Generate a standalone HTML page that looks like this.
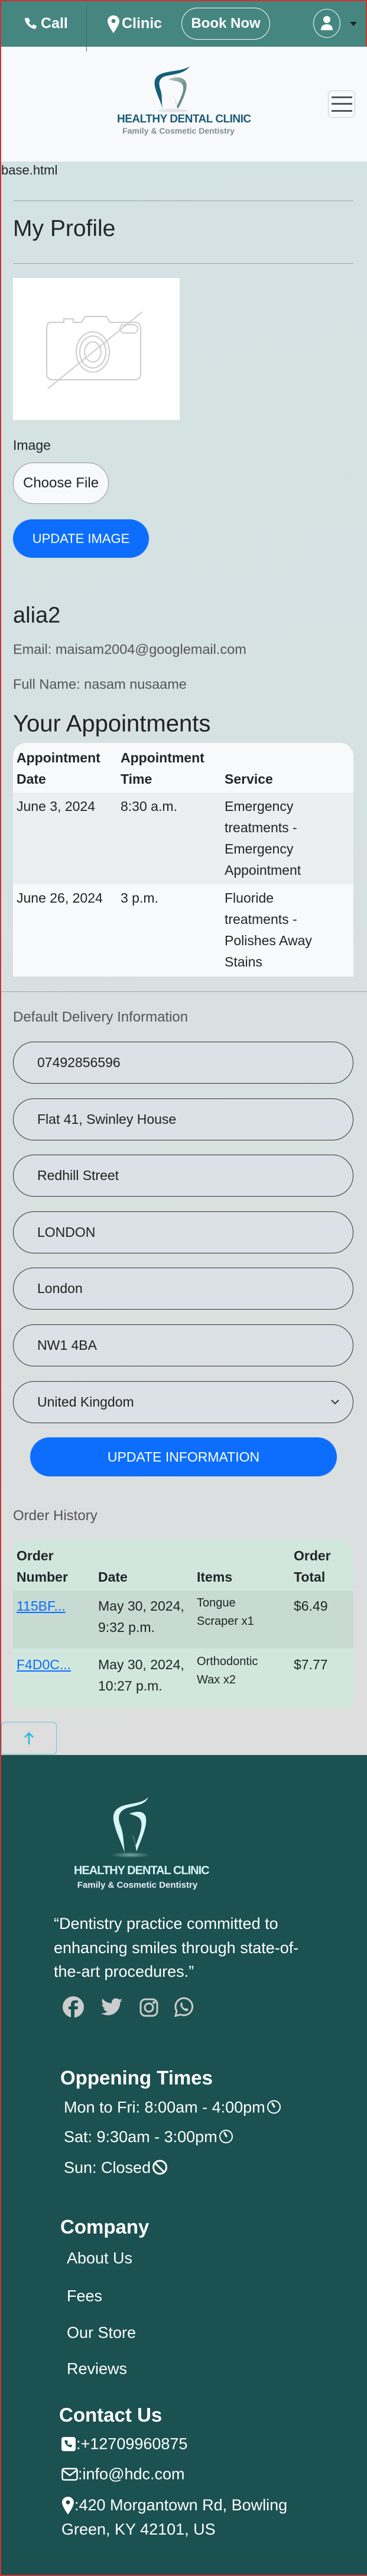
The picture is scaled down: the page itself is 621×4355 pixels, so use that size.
<!DOCTYPE html>
<html><head><meta charset="utf-8">
<style>
*{margin:0;padding:0;box-sizing:border-box}
body{width:621px;height:4355px;position:relative;font-family:"Liberation Sans",sans-serif;color:#212529;overflow:hidden;background:#dcdedf}
.a{position:absolute}
.top{left:0;top:0;width:621px;height:79px;background:#468680;border:2px solid #c33;border-bottom:none}
.hdr{left:0;top:79px;width:621px;height:194px;background:#f8f9fa}
.main{left:0;top:273px;width:621px;height:2694px;background:linear-gradient(170deg,#d3e2e3 0%,#d6e1e2 40%,#dedede 100%)}
.foot{left:0;top:2967px;width:621px;height:1388px;background:#1b5150}
.edge{left:0;top:0;width:2px;height:4355px;background:#c33}
.wt{color:#fff}
.inp{left:22px;width:576px;height:71px;border:1.5px solid #333;border-radius:36px;background:#dbe1e6;font-size:23px;line-height:68px;padding-left:40px;color:#222}
.c{transform:translateY(-50%);white-space:nowrap}
.th{font-weight:bold;font-size:23px;line-height:36px}
.td{font-size:23px;line-height:36px}
.ot{font-size:23px;line-height:36px}
</style></head><body>
<div class="a main"></div>
<div class="a hdr"></div>
<div class="a top"></div>
<div class="a foot"></div>
<div class="a edge"></div>

<!-- top bar -->
<svg class="a" style="left:40px;top:28px" width="25" height="25" viewBox="0 0 24 24"><path fill="#fff" d="M6.6 2.2c.6-.3 1.3 0 1.6.5l2 3.6c.3.6.2 1.3-.3 1.7L8.300 9.300c1 2.300 3.200 4.500 5.500 5.500l1.300-1.600c.4-.5 1.100-.6 1.700-.3l3.600 2c.6.300.800 1 .5 1.600l-1.300 2.600c-.4.800-1.300 1.200-2.200 1C9.700 18.500 3.500 12.300 1.900 4.600c-.2-.9.2-1.800 1-2.200z"/></svg>
<div class="a wt c" style="left:69px;top:40px;font-size:25px;font-weight:bold">Call</div>
<div class="a" style="left:146px;top:9px;width:1px;height:78px;background:#3a6f6a"></div>
<svg class="a" style="left:182px;top:26px" width="20" height="30" viewBox="0 0 20 30"><path fill="#fff" d="M10 0C4.500 0 0 4.300 0 9.700 0 16 10 30 10 30s10-14 10-20.300C20 4.300 15.500 0 10 0zm0 13a3.500 3.500 0 110-7 3.500 3.500 0 010 7z"/></svg>
<div class="a wt c" style="left:206px;top:40px;font-size:25px;font-weight:bold">Clinic</div>
<div class="a wt" style="left:307px;top:13px;width:150px;height:54px;border:1.5px solid #fff;border-radius:27px;font-size:24px;font-weight:bold;text-align:center;line-height:51px">Book Now</div>
<div class="a" style="left:530px;top:15px;width:46px;height:49px;border:1.5px solid #fff;border-radius:50%"></div>
<svg class="a" style="left:543px;top:27px" width="20" height="24" viewBox="0 0 20 24"><circle cx="10" cy="6" r="6" fill="#fff"/><path fill="#fff" d="M0 24c0-7 4-10 10-10s10 3 10 10z"/></svg>
<div class="a" style="left:592px;top:37px;width:0;height:0;border-left:6px solid transparent;border-right:6px solid transparent;border-top:7px solid #222"></div>

<!-- logo -->
<svg class="a" style="left:255px;top:110px" width="70" height="80" viewBox="0 0 70 80">
<defs><linearGradient id="g" x1="0" y1="0" x2="1" y2="1"><stop offset="0" stop-color="#b5c4c2"/><stop offset="1" stop-color="#3f6f6d"/></linearGradient></defs>
<path fill="#145f7a" d="M66 2C55 10 35 9 20 14 8 18 4 26 8 40c4 14 10 24 12 34-2-12 0-24-4-34-4-12 0-20 12-22 14-3 30-4 38-16z"/>
<path fill="url(#g)" d="M30 24c10-4 26-6 30 6 3 10-6 30-14 44-4-8-4-18-8-22 4 6 6 14 6 18 6-12 14-28 10-36-4-8-14-6-24-10z"/>
<ellipse cx="38" cy="77" rx="26" ry="3" fill="#000" opacity=".08"/>
</svg>
<div class="a c" style="left:198px;top:202px;width:208px;text-align:center;font-size:19px;font-weight:bold;color:#1a5c7a;letter-spacing:-.5px">HEALTHY DENTAL CLINIC</div>
<div class="a c" style="left:198px;top:221px;width:208px;text-align:center;font-size:14px;font-weight:bold;color:#7d8f8f">Family &amp; Cosmetic Dentistry</div>
<div class="a" style="left:555px;top:153px;width:46px;height:46px;border:1px solid #ccc;border-radius:7px"></div>
<div class="a" style="left:561px;top:163px;width:35px;height:2.5px;background:#555;box-shadow:0 11px 0 #555,0 23px 0 #555"></div>

<!-- profile -->
<div class="a c" style="left:2px;top:288px;font-size:22px">base.html</div>
<div class="a" style="left:22px;top:339px;width:576px;height:1px;background:#9aa"></div>
<div class="a c" style="left:22px;top:387px;font-size:39px">My Profile</div>
<div class="a" style="left:22px;top:445px;width:576px;height:1px;background:#9aa"></div>
<div class="a" style="left:22px;top:470px;width:282px;height:240px;background:#fff"></div>
<svg class="a" style="left:75px;top:515px" width="175" height="150" viewBox="0 0 175 150" fill="none" stroke="#ccc" stroke-width="2"><path d="M10 30h23v-6h16v6h14l6-10h36l6 10h42q10 0 10 12v74q0 11-9 11H14q-10 0-10-12V42q0-12 6-12z"/><ellipse cx="82" cy="80" rx="28" ry="34"/><ellipse cx="82" cy="80" rx="22" ry="27"/><ellipse cx="82" cy="80" rx="14" ry="17"/><rect x="128" y="34" width="30" height="14" rx="7"/><path d="M6 142L166 12"/></svg>
<div class="a c" style="left:22px;top:753px;font-size:23px">Image</div>
<div class="a" style="left:22px;top:782px;width:162px;height:70px;border:1px solid #999;border-radius:35px;background:#f8f9fa;font-size:24px;line-height:68px;padding-left:16px;white-space:nowrap">Choose File</div>
<div class="a wt" style="left:22px;top:878px;width:230px;height:65px;border-radius:33px;background:#0d6efd;font-size:22px;text-align:center;line-height:65px">UPDATE IMAGE</div>
<div class="a c" style="left:22px;top:1041px;font-size:38px">alia2</div>
<div class="a c" style="left:22px;top:1098px;font-size:23.5px;color:#555">Email: maisam2004@googlemail.com</div>
<div class="a c" style="left:22px;top:1157px;font-size:23.5px;color:#555">Full Name: nasam nusaame</div>
<div class="a c" style="left:22px;top:1224px;font-size:40px;color:#222">Your Appointments</div>

<!-- appointments table -->
<div class="a" style="left:22px;top:1256px;width:576px;height:84px;background:#f8f9fa;border-radius:22px 22px 0 0"></div>
<div class="a" style="left:22px;top:1340px;width:576px;height:155px;background:#eceeef"></div>
<div class="a" style="left:22px;top:1495px;width:576px;height:156px;background:#f8f9fa"></div>
<div class="a th" style="left:28px;top:1263px">Appointment<br>Date</div>
<div class="a th" style="left:204px;top:1263px">Appointment<br>Time</div>
<div class="a th" style="left:380px;top:1299px">Service</div>
<div class="a td" style="left:28px;top:1345px">June 3, 2024</div>
<div class="a td" style="left:204px;top:1345px">8:30 a.m.</div>
<div class="a td" style="left:380px;top:1345px">Emergency<br>treatments -<br>Emergency<br>Appointment</div>
<div class="a td" style="left:28px;top:1500px">June 26, 2024</div>
<div class="a td" style="left:204px;top:1500px">3 p.m.</div>
<div class="a td" style="left:380px;top:1500px">Fluoride<br>treatments -<br>Polishes Away<br>Stains</div>
<div class="a" style="left:2px;top:1676px;width:619px;height:1px;background:#9aa"></div>

<!-- delivery -->
<div class="a c" style="left:22px;top:1720px;font-size:24px;color:#555">Default Delivery Information</div>
<div class="a inp" style="top:1761px">07492856596</div>
<div class="a inp" style="top:1857px">Flat 41, Swinley House</div>
<div class="a inp" style="top:1952px">Redhill Street</div>
<div class="a inp" style="top:2048px">LONDON</div>
<div class="a inp" style="top:2143px">London</div>
<div class="a inp" style="top:2239px">NW1 4BA</div>
<div class="a inp" style="top:2335px">United Kingdom</div>
<svg class="a" style="left:560px;top:2365px" width="14" height="10" viewBox="0 0 14 10"><path d="M1 2l6 6 6-6" fill="none" stroke="#333" stroke-width="2"/></svg>
<div class="a wt" style="left:51px;top:2430px;width:519px;height:66px;border-radius:33px;background:#0d6efd;font-size:23px;text-align:center;line-height:66px">UPDATE INFORMATION</div>
<div class="a c" style="left:22px;top:2563px;font-size:24px;color:#555">Order History</div>

<!-- orders -->
<div class="a" style="left:22px;top:2603px;width:576px;height:86px;background:#d1e7dd;border-radius:22px 22px 0 0"></div>
<div class="a" style="left:22px;top:2689px;width:576px;height:98px;background:#c7dbd2"></div>
<div class="a" style="left:22px;top:2787px;width:576px;height:100px;background:#d1e7dd"></div>
<div class="a th" style="left:28px;top:2612px">Order<br>Number</div>
<div class="a th" style="left:166px;top:2648px">Date</div>
<div class="a th" style="left:333px;top:2648px">Items</div>
<div class="a th" style="left:497px;top:2612px">Order<br>Total</div>
<div class="a ot" style="left:28px;top:2697px;color:#0d6efd;text-decoration:underline">115BF...</div>
<div class="a ot" style="left:166px;top:2697px">May 30, 2024,<br>9:32 p.m.</div>
<div class="a" style="left:333px;top:2695px;font-size:20px;line-height:31px">Tongue<br>Scraper x1</div>
<div class="a ot" style="left:497px;top:2697px">$6.49</div>
<div class="a ot" style="left:28px;top:2796px;color:#0d6efd;text-decoration:underline">F4D0C...</div>
<div class="a ot" style="left:166px;top:2796px">May 30, 2024,<br>10:27 p.m.</div>
<div class="a" style="left:333px;top:2794px;font-size:20px;line-height:31px">Orthodontic<br>Wax x2</div>
<div class="a ot" style="left:497px;top:2796px">$7.77</div>
<div class="a" style="left:2px;top:2911px;width:94px;height:55px;border:1px solid #6cc4dc;border-radius:6px"></div>
<svg class="a" style="left:40px;top:2928px" width="18" height="22" viewBox="0 0 18 22"><path d="M9 21V3M2 9l7-7 7 7" fill="none" stroke="#29b6e0" stroke-width="2.5"/></svg>

<!-- footer -->
<svg class="a" style="left:185px;top:3036px" width="72" height="106" viewBox="0 0 72 106">
<defs><radialGradient id="gl" cx=".5" cy=".5" r=".5"><stop offset="0" stop-color="#cff" stop-opacity=".5"/><stop offset="1" stop-color="#cff" stop-opacity="0"/></radialGradient></defs>
<path fill="#d8f6f6" d="M66 2C58 12 40 12 26 16 10 20 4 30 8 46c4 18 12 32 18 50-2-18-2-34-8-48-5-14 0-24 14-28 16-4 30-6 34-18z"/>
<path fill="#d8f6f6" d="M34 30c12-4 26-6 28 8 2 14-8 36-16 56-2-10-2-22-8-28 4 6 6 14 6 20 6-16 12-32 10-42-2-10-12-10-20-14z"/>
<ellipse cx="36" cy="100" rx="34" ry="5" fill="url(#gl)"/>
</svg>
<div class="a c" style="left:125px;top:3163px;width:215px;text-align:center;font-size:20px;font-weight:bold;color:#d8f6f6;letter-spacing:-1px">HEALTHY DENTAL CLINIC</div>
<div class="a c" style="left:125px;top:3187px;width:215px;text-align:center;font-size:15px;font-weight:bold;color:#eef">Family &amp; Cosmetic Dentistry</div>
<div class="a wt" style="left:91px;top:3232px;width:425px;font-size:27px;line-height:40.5px">“Dentistry practice committed to enhancing smiles through state-of-the-art procedures.”</div>
<svg class="a" style="left:106px;top:3375px" width="36" height="36" viewBox="0 0 36 36"><circle cx="18" cy="18" r="18" fill="#ccc"/><path fill="#1b5150" d="M20 36V22h5l1-5h-6v-3c0-2 1-3 3-3h3V7c-1 0-3-.3-5-.3-4 0-7 2.500-7 7v3.300H10v5h4V36z"/></svg>
<svg class="a" style="left:171px;top:3378px" width="36" height="30" viewBox="0 0 24 20"><path fill="#ccc" d="M24 2.300c-.9.4-1.800.7-2.800.8 1-.6 1.800-1.600 2.200-2.700-1 .6-2 1-3.100 1.200A4.900 4.900 0 0012 5.900 14 14 0 011.700.7a4.900 4.900 0 001.500 6.600c-.8 0-1.600-.2-2.200-.6 0 2.400 1.700 4.400 3.900 4.800-.7.200-1.500.2-2.200.1.600 2 2.400 3.400 4.600 3.400A9.900 9.900 0 010 17.100 14 14 0 007.500 19.300c9.100 0 14-7.500 14-14v-.6c1-.7 1.800-1.600 2.500-2.400z"/></svg>
<svg class="a" style="left:236px;top:3378px" width="32" height="32" viewBox="0 0 32 32" fill="none" stroke="#ccc" stroke-width="3"><rect x="2" y="2" width="28" height="28" rx="8"/><circle cx="16" cy="16" r="7"/><circle cx="24.500" cy="7.500" r="1" fill="#ccc"/></svg>
<svg class="a" style="left:295px;top:3376px" width="33" height="34" viewBox="0 0 33 34"><path d="M16.500 2A14.500 14.500 0 004 24L2 32l8.300-2.200A14.500 14.500 0 1016.500 2z" fill="none" stroke="#ccc" stroke-width="3"/><path fill="#ccc" d="M11 9.500c1-.5 1.600-.5 2 .5l1.200 3c.2.600-.3 1.200-1 2 1 2 2.800 3.800 5 5 .8-.7 1.400-1.200 2-1l3 1.400c.8.400.7 1.200 0 2.200-1 1.300-2.500 1.700-4 1.200-4-1.300-7.300-4.600-8.700-8.500-.5-1.600 0-4 .5-5.800z"/></svg>

<div class="a wt c" style="left:102px;top:3513px;font-size:33px;font-weight:bold">Oppening Times</div>
<div class="a wt c" style="left:108px;top:3563px;font-size:27px">Mon to Fri: 8:00am - 4:00pm<span style="display:inline-block;margin-left:3px;width:23px;height:23px;border:2.5px solid #fff;border-radius:50%;vertical-align:-2px;position:relative"><span style="position:absolute;left:7px;top:2px;width:2.5px;height:9px;background:#fff;transform:rotate(-30deg)"></span></span></div>
<div class="a wt c" style="left:108px;top:3613px;font-size:27px">Sat: 9:30am - 3:00pm<span style="display:inline-block;margin-left:3px;width:23px;height:23px;border:2.5px solid #fff;border-radius:50%;vertical-align:-2px;position:relative"><span style="position:absolute;left:7px;top:2px;width:2.5px;height:9px;background:#fff;transform:rotate(-30deg)"></span></span></div>
<div class="a wt c" style="left:108px;top:3665px;font-size:27px">Sun: Closed<span style="display:inline-block;margin-left:3px;width:25px;height:25px;border:3px solid #fff;border-radius:50%;vertical-align:-3px;position:relative"><span style="position:absolute;left:8px;top:-1px;width:3px;height:23px;background:#fff;transform:rotate(-45deg)"></span></span></div>
<div class="a wt c" style="left:102px;top:3765px;font-size:33px;font-weight:bold">Company</div>
<div class="a wt c" style="left:113px;top:3818px;font-size:27px">About Us</div>
<div class="a wt c" style="left:113px;top:3882px;font-size:27px">Fees</div>
<div class="a wt c" style="left:113px;top:3944px;font-size:27px">Our Store</div>
<div class="a wt c" style="left:113px;top:4005px;font-size:27px">Reviews</div>
<div class="a wt c" style="left:100px;top:4083px;font-size:33px;font-weight:bold">Contact Us</div>
<div class="a" style="left:104px;top:4120px;width:24px;height:24px;background:#fff;border-radius:4px"></div>
<svg class="a" style="left:108px;top:4124px" width="16" height="16" viewBox="0 0 24 24"><path fill="#1b5150" d="M6.6 2.2c.6-.3 1.3 0 1.6.5l2 3.6c.3.6.2 1.3-.3 1.7L8.300 9.300c1 2.300 3.200 4.500 5.500 5.500l1.300-1.600c.4-.5 1.100-.6 1.700-.3l3.600 2c.6.300.800 1 .5 1.600l-1.300 2.600c-.4.800-1.300 1.200-2.200 1C9.700 18.500 3.500 12.300 1.900 4.600c-.2-.9.2-1.800 1-2.200z"/></svg>
<div class="a wt c" style="left:129px;top:4132px;font-size:27px">:+12709960875</div>
<svg class="a" style="left:104px;top:4172px" width="28" height="22" viewBox="0 0 28 22" fill="none" stroke="#fff" stroke-width="2.5"><rect x="1.500" y="1.500" width="25" height="19" rx="3"/><path d="M2 4l12 9 12-9"/></svg>
<div class="a wt c" style="left:132px;top:4183px;font-size:27px">:info@hdc.com</div>
<svg class="a" style="left:104px;top:4221px" width="22" height="30" viewBox="0 0 20 30"><path fill="#fff" d="M10 0C4.500 0 0 4.300 0 9.700 0 16 10 30 10 30s10-14 10-20.300C20 4.300 15.500 0 10 0zm0 13a3.500 3.500 0 110-7 3.500 3.500 0 010 7z"/></svg>
<div class="a wt" style="left:104px;top:4215px;width:405px;font-size:27px;line-height:41px;text-indent:22px">:420 Morgantown Rd, Bowling Green, KY 42101, US</div>
<div class="a" style="left:0;top:4353px;width:621px;height:2px;background:#c33"></div>
</body></html>
